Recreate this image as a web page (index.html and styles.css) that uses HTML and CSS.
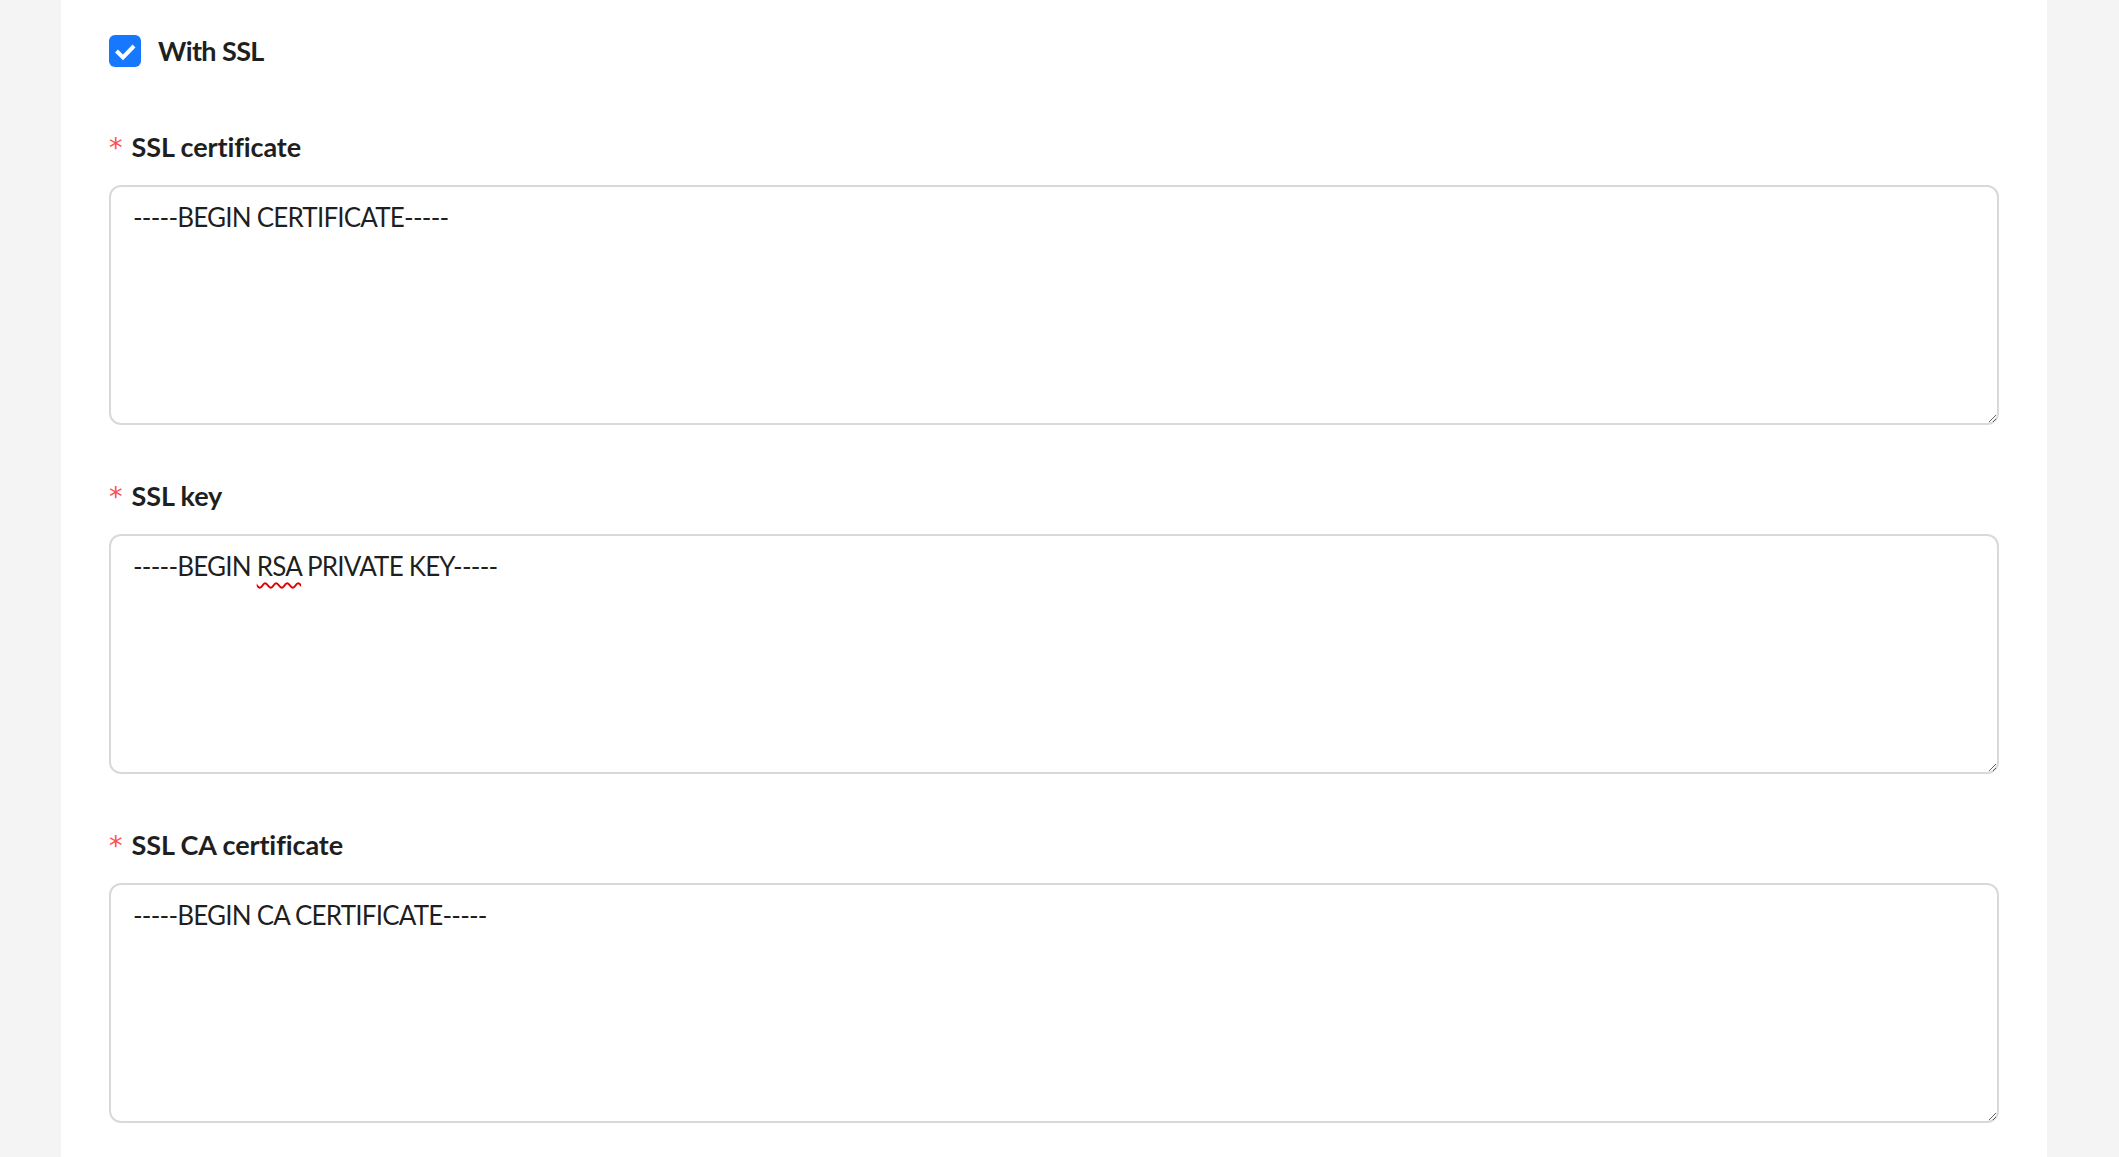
FILE: index.html
```html
<!DOCTYPE html>
<html lang="en">
<head>
<meta charset="utf-8">
<title>SSL settings</title>
<link rel="stylesheet" href="styles.css">
</head>
<body>
<main class="panel">
  <label class="check-row">
    <span class="check-box">
      <svg viewBox="0 0 32 32" width="32" height="32" aria-hidden="true"><polyline points="7.5,16 14,22.5 25,11" fill="none" stroke="#fff" stroke-width="4" stroke-linecap="butt" stroke-linejoin="miter"/></svg>
    </span>
    <span class="check-label">With SSL</span>
  </label>

  <div class="field">
    <div class="field-label"><span class="req">*</span>SSL certificate</div>
    <div class="textarea">-----BEGIN CERTIFICATE-----</div>
  </div>

  <div class="field">
    <div class="field-label"><span class="req">*</span>SSL key</div>
    <div class="textarea">-----BEGIN <span class="misspelled">RSA</span> PRIVATE KEY-----</div>
  </div>

  <div class="field">
    <div class="field-label"><span class="req">*</span>SSL CA certificate</div>
    <div class="textarea">-----BEGIN CA CERTIFICATE-----</div>
  </div>
</main>
</body>
</html>
```

FILE: styles.css
```css
html, body {
  margin: 0;
  padding: 0;
  height: 100%;
}

body {
  background: #f4f4f4;
  font-family: Lato, "Open Sans", sans-serif;
  color: rgba(0, 0, 0, 0.88);
  overflow: hidden;
}

.panel {
  background: #ffffff;
  margin: 0 72px 0 61px;
  padding: 29px 48px 0 48px;
  min-height: 1157px;
  box-sizing: border-box;
  display: flex;
  flex-direction: column;
}

.check-row {
  display: flex;
  align-items: center;
  height: 44px;
  gap: 17px;
  margin-bottom: 52px;
}

.check-box {
  width: 32px;
  height: 32px;
  border-radius: 6px;
  background: #1677ff;
  display: flex;
  flex: none;
}

.check-label {
  font-size: 27px;
  font-weight: 700;
  line-height: 44px;
  letter-spacing: -0.6px;
  color: #1f1f1f;
}

.field {
  display: flex;
  flex-direction: column;
  margin-bottom: 49px;
}

.field-label {
  display: flex;
  align-items: baseline;
  height: 44px;
  font-size: 27px;
  font-weight: 700;
  line-height: 44px;
  letter-spacing: -0.1px;
  color: #1f1f1f;
  margin-bottom: 16px;
}

.req {
  color: #ff4d4f;
  font-family: "DejaVu Sans", sans-serif;
  font-weight: 400;
  font-size: 27px;
  line-height: 20px;
  letter-spacing: 0;
  margin-right: 9px;
}

.textarea {
  box-sizing: border-box;
  height: 240px;
  border: 2px solid #d9d9d9;
  border-radius: 12px;
  padding: 8px 22px;
  font-size: 26px;
  line-height: 44px;
  letter-spacing: -0.8px;
  color: rgba(0, 0, 0, 0.88);
  background: #fff;
  overflow: auto;
  resize: vertical;
  white-space: pre-wrap;
}

.misspelled {
  text-decoration: underline wavy #e00000;
  text-decoration-thickness: 1.5px;
  text-underline-offset: 6px;
}
```
